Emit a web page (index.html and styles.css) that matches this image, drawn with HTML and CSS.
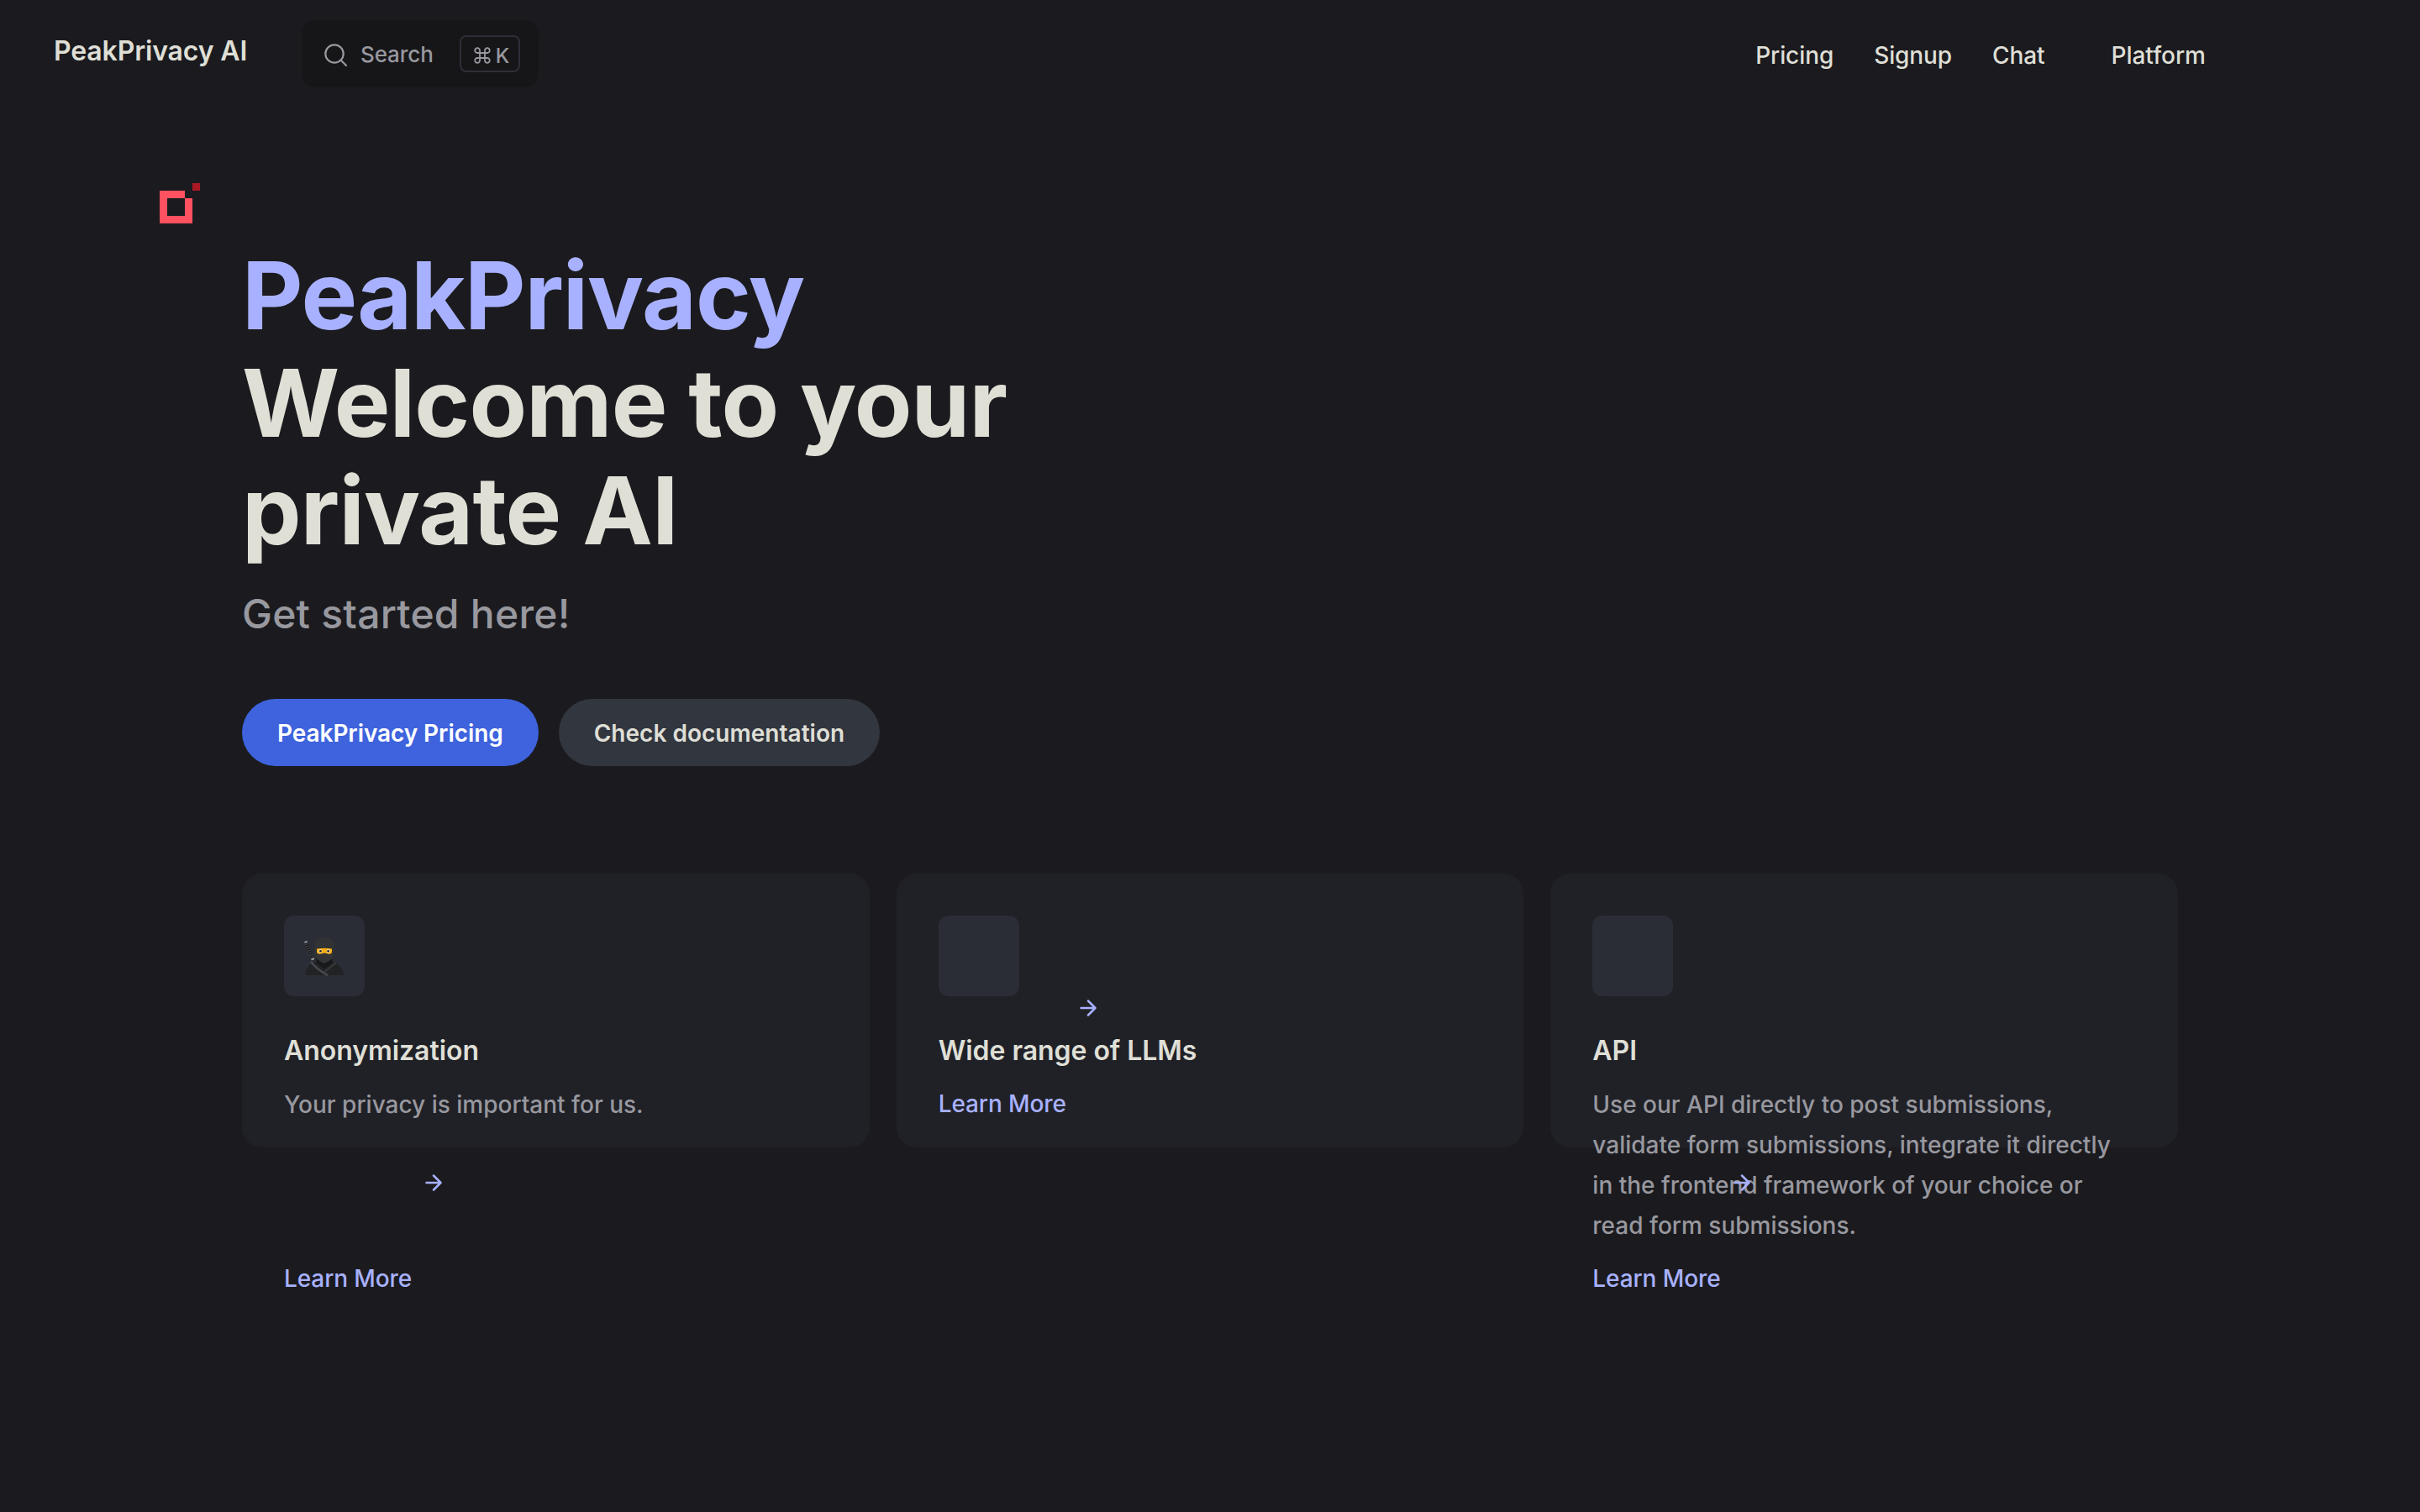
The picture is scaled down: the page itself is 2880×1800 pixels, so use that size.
FILE: index.html
```
<!DOCTYPE html>
<html lang="en">
<head>
    <meta charset="UTF-8">
    <meta name="viewport" content="width=device-width, initial-scale=1.0">
    <title>PeakPrivacy AI</title>
    <link rel="stylesheet" href="styles.css">
</head>
<body>
    <header class="navbar">
        <a class="site-title" href="#">PeakPrivacy AI</a>
        <button class="search" type="button">
            <svg class="search-icon" viewBox="0 0 28 28" fill="none" stroke="currentColor" stroke-width="2.2" stroke-linecap="round">
                <circle cx="12" cy="12" r="10.700"/>
                <path d="M19.800 19.800L26 26"/>
            </svg>
            <span class="search-text">Search</span>
            <kbd class="search-keys"><svg class="cmd-icon" viewBox="0 0 20 20" fill="none" stroke="currentColor" stroke-width="1.8"><path d="M7 7V4.3A2.9 2.9 0 1 0 4.1 7H15.900A2.9 2.9 0 1 0 13 4.300V15.700A2.9 2.9 0 1 0 15.900 13H4.100A2.9 2.9 0 1 0 7 15.700Z"/></svg><span>K</span></kbd>
        </button>
        <nav class="menu">
            <a href="#">Pricing</a>
            <a href="#">Signup</a>
            <a href="#">Chat</a>
            <a class="menu-last" href="#">Platform</a>
        </nav>
    </header>

    <svg class="logo" viewBox="0 0 48 48" shape-rendering="crispEdges">
        <path fill="#ff515f" fill-rule="evenodd" d="M0 9H30V18H39V48H0ZM9 18V39H30V18Z"/>
        <rect fill="#ab1823" x="39" y="0" width="9" height="9"/>
    </svg>

    <main class="container">
        <!-- Hero Section -->
        <section class="hero">
            <h1>
                <span class="name">PeakPrivacy</span>
                <span class="text">Welcome to your private AI</span>
            </h1>
            <p class="tagline">Get started here!</p>
            <div class="actions">
                <a class="button brand" href="#">PeakPrivacy Pricing</a>
                <a class="button alt" href="#">Check documentation</a>
            </div>
        </section>

        <!-- Feature Cards -->
        <section class="features">
            <article class="card">
                <div class="icon">
                    <svg class="ninja" viewBox="0 0 48 48">
                        <path d="M2 6L11 27" stroke="#4a4b4f" stroke-width="2.800"/>
                        <path d="M2 6L11 27" stroke="#111214" stroke-width="2.800" stroke-dasharray="1.600 1.200"/>
                        <path d="M0.500 6L3.500 4.800M8.500 26.500L12 25" stroke="#b0b2b4" stroke-width="1.800"/>
                        <path fill="#222325" d="M1 45C2 37 5 32 13 29H34C42 32 46 37 47 45Z"/>
                        <path fill="#303234" d="M12 15C12 4 15 0 24 0S36 4 36 15C36 24 33 29 24 32C15 29 12 24 12 15Z"/>
                        <path fill="#18191b" d="M14 25Q24 33 34 25L33 31L24 37L15 31Z"/>
                        <path fill="#323436" d="M13.500 20Q24 18 34.500 20Q34 27 24 31Q14 27 13.500 20Z"/>
                        <path fill="#f5ad14" d="M15 13.500Q24 11.800 33 13.500V18Q32 20.500 28 19.500L24 18.600L20 19.500Q16 20.500 15 18Z"/>
                        <circle cx="19.200" cy="16.200" r="2" fill="#ececec"/>
                        <circle cx="28.800" cy="16.200" r="2" fill="#ececec"/>
                        <circle cx="19.400" cy="16.200" r="1.300" fill="#1c1714"/>
                        <circle cx="28.600" cy="16.200" r="1.300" fill="#1c1714"/>
                        <path d="M8 29Q15 38 28 45" fill="none" stroke="#46484b" stroke-width="2.800"/>
                        <path d="M38 30L24 41" stroke="#38393c" stroke-width="2"/>
                    </svg>
                </div>
                <h2>Anonymization</h2>
                <p class="details">Your privacy is important for us.</p>
                <a class="link" href="#">Learn More
                    <svg class="arrow" viewBox="0 0 20 20"><path d="M1.500 10H18.500M10 1.500L18.500 10L10 18.500"/></svg>
                </a>
            </article>
            <article class="card">
                <div class="icon"></div>
                <h2>Wide range of LLMs</h2>
                <a class="link" href="#">Learn More
                    <svg class="arrow" viewBox="0 0 20 20"><path d="M1.500 10H18.500M10 1.500L18.500 10L10 18.500"/></svg>
                </a>
            </article>
            <article class="card">
                <div class="icon"></div>
                <h2>API</h2>
                <p class="details">Use our API directly to post submissions, validate form submissions, integrate it directly in the frontend framework of your choice or read form submissions.</p>
                <a class="link" href="#">Learn More
                    <svg class="arrow" viewBox="0 0 20 20"><path d="M1.500 10H18.500M10 1.500L18.500 10L10 18.500"/></svg>
                </a>
            </article>
        </section>
    </main>
</body>
</html>
```
FILE: styles.css
```
/* Global Styles */
* {
    margin: 0;
    padding: 0;
    box-sizing: border-box;
}

body {
    background-color: #1b1b1f;
    color: #dfdfd6;
    font-family: Inter, sans-serif;
    font-size: 28px;
    font-weight: 500;
    line-height: 48px;
    min-height: 100vh;
}

a {
    color: inherit;
    text-decoration: none;
}

/* Navbar */
.navbar {
    display: flex;
    align-items: center;
    height: 128px;
    padding: 0 255px 0 64px;
}

.site-title {
    width: 295px;
    font-size: 32px;
    font-weight: 600;
    letter-spacing: -0.15px;
    padding-bottom: 7px;
}

.search {
    display: flex;
    align-items: center;
    width: 282px;
    height: 80px;
    padding: 0 22px 0 27px;
    border: none;
    border-radius: 16px;
    background: #161618;
    color: #98989f;
    font-family: inherit;
}

.search-icon {
    width: 28px;
    height: 28px;
    margin-top: 4px;
}

.search-text {
    margin-left: 15px;
    font-size: 26px;
    font-weight: 500;
    letter-spacing: -0.1px;
}

.search-keys {
    display: flex;
    align-items: center;
    justify-content: center;
    gap: 6px;
    width: 72px;
    height: 44px;
    padding: 4px 0 0 4px;
    margin-left: auto;
    border: 2px solid #2e2e38;
    border-radius: 8px;
    font-family: inherit;
    font-size: 24px;
    font-weight: 500;
}

.cmd-icon {
    width: 20px;
    height: 20px;
}

.menu {
    display: flex;
    gap: 48px;
    margin-left: auto;
    padding-top: 4px;
    letter-spacing: -0.1px;
}

.menu-last {
    margin-left: 31px;
    letter-spacing: 0;
}

/* Logo Mark */
.logo {
    display: block;
    width: 48px;
    height: 48px;
    margin: 90px 0 0 190px;
}

/* Hero Section */
.container {
    width: 2304px;
    margin: 21px auto 0;
}

.hero h1 {
    width: 1152px;
    font-size: 112px;
    font-weight: 700;
    line-height: 128px;
    letter-spacing: -0.8px;
}

.hero h1 span {
    display: block;
}

.hero h1 .name {
    color: #a8b1ff;
    letter-spacing: -1.1px;
}

.tagline {
    padding-top: 24px;
    color: #98989f;
    font-size: 48px;
    line-height: 72px;
    letter-spacing: 0.25px;
}

.actions {
    display: flex;
    gap: 24px;
    padding-top: 65px;
}

.button {
    padding: 3px 42px 0;
    border-radius: 40px;
    font-weight: 600;
    line-height: 77px;
}

.brand {
    background: #3e63dd;
    color: white;
    letter-spacing: -0.08px;
}

.alt {
    background: #32363f;
    letter-spacing: 0.03px;
}

/* Feature Cards */
.features {
    display: grid;
    grid-template-columns: repeat(3, 1fr);
    gap: 32px;
    margin-top: 128px;
}

.card {
    height: 326px;
    padding: 50px;
    border-radius: 24px;
    background: #202127;
}

.icon {
    display: flex;
    align-items: center;
    justify-content: center;
    width: 96px;
    height: 96px;
    margin-bottom: 41px;
    border-radius: 12px;
    background: #2b2d36;
}

.ninja {
    width: 48px;
    height: 48px;
    margin-top: 3px;
}

.card h2 {
    font-size: 32px;
    font-weight: 600;
    letter-spacing: -0.05px;
}

/* Text keeps four lines of room, even past the card edge */
.details {
    min-height: 208px;
    padding-top: 16px;
    color: #98989f;
}

.link {
    display: block;
    position: relative;
    margin-top: 15px;
    color: #a8b1ff;
    letter-spacing: -0.1px;
}

.arrow {
    position: absolute;
    top: -100px;
    left: 168px;
    width: 20px;
    height: 20px;
    fill: none;
    stroke: currentColor;
    stroke-width: 2.5;
    stroke-linecap: round;
    stroke-linejoin: round;
}
```
